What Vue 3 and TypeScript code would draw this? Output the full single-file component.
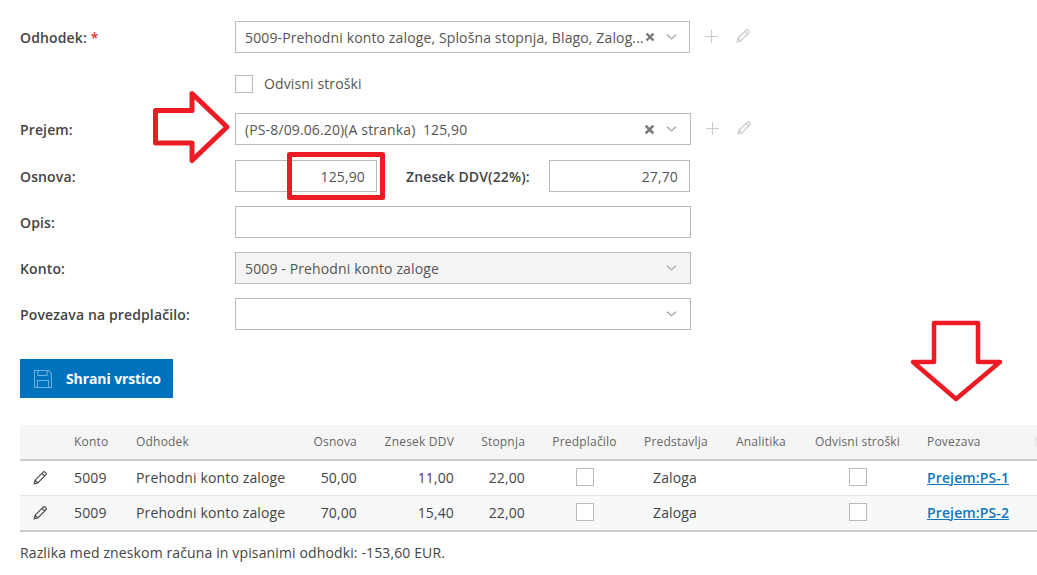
<script setup lang="ts">
interface Row { konto: string; odhodek: string; osnova: string; ddv: string; stopnja: string; predstavlja: string; link: string }
const rows: Row[] = [
  { konto: '5009', odhodek: 'Prehodni konto zaloge', osnova: '50,00', ddv: '11,00', stopnja: '22,00', predstavlja: 'Zaloga', link: 'Prejem:PS-1' },
  { konto: '5009', odhodek: 'Prehodni konto zaloge', osnova: '70,00', ddv: '15,40', stopnja: '22,00', predstavlja: 'Zaloga', link: 'Prejem:PS-2' },
]
const pencil = 'M2.2 13.8l.9-3.6L11.2 2.1a1.3 1.3 0 0 1 1.8 0l.9.9a1.3 1.3 0 0 1 0 1.8L5.8 12.9zM3.1 10.2l2.7 2.7M10 3.3l2.7 2.7'
</script>

<template>
  <div class="page">
    <div class="row r1">
      <label class="lab">Odhodek: <span class="req">*</span></label>
      <div class="select w455">
        <span class="val">5009-Prehodni konto zaloge, Splošna stopnja, Blago, Zalog...</span>
        <svg class="clear" viewBox="0 0 10 10"><path d="M1.5 1.5l7 7M8.5 1.5l-7 7" /></svg>
        <svg class="chev" viewBox="0 0 14 8"><path d="M1 1l6 5.5L13 1" /></svg>
      </div>
      <svg class="act plus" viewBox="0 0 14 14"><path d="M7 0v14M0 7h14" /></svg>
      <svg class="act pen" viewBox="0 0 16 16"><path :d="pencil" /></svg>
    </div>

    <div class="row r2">
      <span class="lab"></span>
      <span class="box"></span>
      <span class="check-text">Odvisni stroški</span>
    </div>

    <div class="row r3">
      <label class="lab">Prejem:</label>
      <div class="select w456">
        <span class="val">(PS-8/09.06.20)(A stranka)&nbsp; 125,90</span>
        <svg class="clear big" viewBox="0 0 10 10"><path d="M1.5 1.5l7 7M8.5 1.5l-7 7" /></svg>
        <svg class="chev" viewBox="0 0 14 8"><path d="M1 1l6 5.5L13 1" /></svg>
      </div>
      <svg class="act plus" viewBox="0 0 14 14"><path d="M7 0v14M0 7h14" /></svg>
      <svg class="act pen" viewBox="0 0 16 16"><path :d="pencil" /></svg>
    </div>

    <div class="row r4">
      <label class="lab">Osnova:</label>
      <div class="input num w142">125,90</div>
      <label class="lab2">Znesek DDV(22%):</label>
      <div class="input num w141">27,70</div>
    </div>

    <div class="row r5">
      <label class="lab">Opis:</label>
      <div class="input w456"></div>
    </div>

    <div class="row r5">
      <label class="lab">Konto:</label>
      <div class="select w456 disabled">
        <span class="val">5009 - Prehodni konto zaloge</span>
        <svg class="chev" viewBox="0 0 14 8"><path d="M1 1l6 5.5L13 1" /></svg>
      </div>
    </div>

    <div class="row r5">
      <label class="lab">Povezava na predplačilo:</label>
      <div class="select w456">
        <span class="val"></span>
        <svg class="chev" viewBox="0 0 14 8"><path d="M1 1l6 5.5L13 1" /></svg>
      </div>
    </div>

    <button class="save" type="button">
      <svg viewBox="0 0 18 18"><path d="M.5.5h14l3 3v14H.5zM4 .5v5h9v-5M3.500 17.500v-7h11v7" /></svg>
      <span>Shrani vrstico</span>
    </button>

    <table class="grid">
      <colgroup>
        <col class="c0" /><col class="c1" /><col class="c2" /><col class="c3" /><col class="c4" /><col class="c5" />
        <col class="c6" /><col class="c7" /><col class="c8" /><col class="c9" /><col class="c10" />
      </colgroup>
      <thead>
        <tr>
          <th></th><th>Konto</th><th>Odhodek</th>
          <th class="right">Osnova</th><th class="right">Znesek DDV</th><th class="right">Stopnja</th>
          <th class="center">Predplačilo</th><th>Predstavlja</th><th>Analitika</th>
          <th class="center">Odvisni stroški</th><th class="last">Povezava</th>
        </tr>
      </thead>
      <tbody>
        <tr v-for="r in rows" :key="r.link">
          <td class="edit"><svg viewBox="0 0 16 16"><path :d="pencil" /></svg></td>
          <td>{{ r.konto }}</td>
          <td>{{ r.odhodek }}</td>
          <td class="right">{{ r.osnova }}</td>
          <td class="right">{{ r.ddv }}</td>
          <td class="right">{{ r.stopnja }}</td>
          <td class="center"><span class="box small"></span></td>
          <td class="pred">{{ r.predstavlja }}</td>
          <td></td>
          <td class="center"><span class="box small"></span></td>
          <td><a class="link" href="#">{{ r.link }}</a></td>
        </tr>
      </tbody>
    </table>

    <p class="note">Razlika med zneskom računa in vpisanimi odhodki: -153,60 EUR.</p>

    <svg class="marks" viewBox="0 0 1037 575" width="1037" height="575">
      <path d="M155.500 110.500H192V93.500L227 127 192 160.500V143H155.500z" stroke-width="5" />
      <rect x="289.500" y="154.500" width="93" height="43" stroke-width="5" />
      <path d="M934 323H978V362H1000L956 399 913 362H934z" stroke-width="4.500" />
    </svg>
  </div>
</template>

<style>
html, body { margin: 0; background: #fff; }
</style>

<style scoped>
.page {
  position: relative;
  width: 1037px;
  height: 575px;
  overflow: hidden;
  box-sizing: border-box;
  padding: 21px 0 0 20px;
  font-family: "Open Sans", sans-serif;
  font-size: 14px;
  letter-spacing: .13px;
  color: #444;
  background: #fff;
}
.row { display: flex; align-items: center; height: 32px; }
.r2 { margin-top: 22px; height: 18px; }
.r3 { margin-top: 20px; }
.r4 { margin-top: 15px; }
.r5 { margin-top: 14px; }
.lab { width: 215px; flex: none; font-weight: 600; color: #444; }
.req { color: #e4312f; }
.select, .input {
  box-sizing: border-box;
  height: 32px;
  flex: none;
  border: 1px solid #bbb;
  background: #fff;
  display: flex;
  align-items: center;
  color: #555;
}
.w455 { width: 455px; }
.w456 { width: 456px; }
.w142 { width: 142px; }
.w141 { width: 141px; }
.select { padding-left: 9px; }
.val { flex: 1; min-width: 0; white-space: nowrap; }
.disabled { background: #f4f4f4; }
.clear { flex: none; width: 10px; height: 10px; }
.clear path { stroke: #777; stroke-width: 2.4; fill: none; }
.clear.big { width: 11px; height: 11px; }
.chev { flex: none; width: 11px; height: 6px; margin: 0 12px 0 11px; }
.w456 .chev { margin-right: 13px; }
.chev path { stroke: #999; stroke-width: 1.400; fill: none; }
.act { flex: none; fill: none; stroke: #ccc; stroke-width: 1.300; }
.plus { width: 13px; height: 13px; margin-left: 15px; margin-top: -1px; }
.pen { width: 16px; height: 16px; margin-left: 17px; margin-top: -2px; }
.box {
  display: inline-block;
  box-sizing: border-box;
  width: 18px;
  height: 18px;
  flex: none;
  border: 1px solid #bbb;
  background: #fff;
}
.check-text { margin-left: 11px; margin-bottom: 2px; color: #555; }
.num { justify-content: flex-end; padding-right: 11px; }
.lab2 { margin-left: 29px; width: 143px; flex: none; font-weight: 600; color: #444; }
.save {
  display: flex;
  align-items: center;
  box-sizing: border-box;
  width: 153px;
  height: 39px;
  margin-top: 29px;
  padding: 0 0 0 14px;
  border: 0;
  background: #0071bc;
  color: #fff;
  font: 700 14px "Open Sans", sans-serif;
  letter-spacing: -.1px;
}
.save svg { width: 18px; height: 18px; margin-right: 14px; fill: none; stroke: #6fb0dd; stroke-width: 1.100; }
.grid {
  table-layout: fixed;
  width: 1017px;
  margin-top: 27px;
  border-collapse: separate;
  border-spacing: 0;
  border-bottom: 2px solid #ccc;
}
.c0 { width: 41px; } .c1 { width: 62px; } .c2 { width: 177px; } .c3 { width: 70px; }
.c4 { width: 97px; } .c5 { width: 71px; } .c6 { width: 93px; } .c7 { width: 92px; }
.c8 { width: 78px; } .c9 { width: 113px; } .c10 { width: 123px; }
th {
  height: 36px;
  padding: 0 13px 2px;
  box-sizing: border-box;
  background: #f5f5f5;
  border-bottom: 2px solid #ccc;
  font-size: 12px;
  font-weight: 400;
  letter-spacing: .2px;
  color: #666;
  text-align: left;
  white-space: nowrap;
}
th.last { position: relative; }
th.last::after {
  content: "";
  position: absolute;
  right: 0;
  top: 12px;
  width: 2px;
  height: 9px;
  background: #e6e6e6;
}
td {
  height: 35px;
  padding: 0 13px 2px;
  box-sizing: border-box;
  color: #444;
  white-space: nowrap;
  border-top: 1px solid #e3e5e5;
}
tbody tr:first-child td { border-top: 0; height: 34px; }
tbody tr:nth-child(2) td { background: #f7f9f9; }
th.right, td.right { text-align: right; }
th.center, td.center { text-align: center; padding: 0 0 2px; }
.small { display: block; margin: 0 auto; }
td.pred { padding-left: 22px; }
td.edit { padding: 0 0 1px 12px; }
.edit svg { display: block; width: 16px; height: 16px; fill: none; stroke: #4a4a4a; stroke-width: 1.200; }
.link { color: #0f75bc; font-weight: 600; font-size: 14px; text-decoration: underline; }
.note { margin: 11px 0 0; font-size: 14px; color: #444; }
.marks { position: absolute; left: 0; top: 0; pointer-events: none; }
.marks path, .marks rect { fill: none; stroke: #ed1c24; stroke-linejoin: round; }
</style>
